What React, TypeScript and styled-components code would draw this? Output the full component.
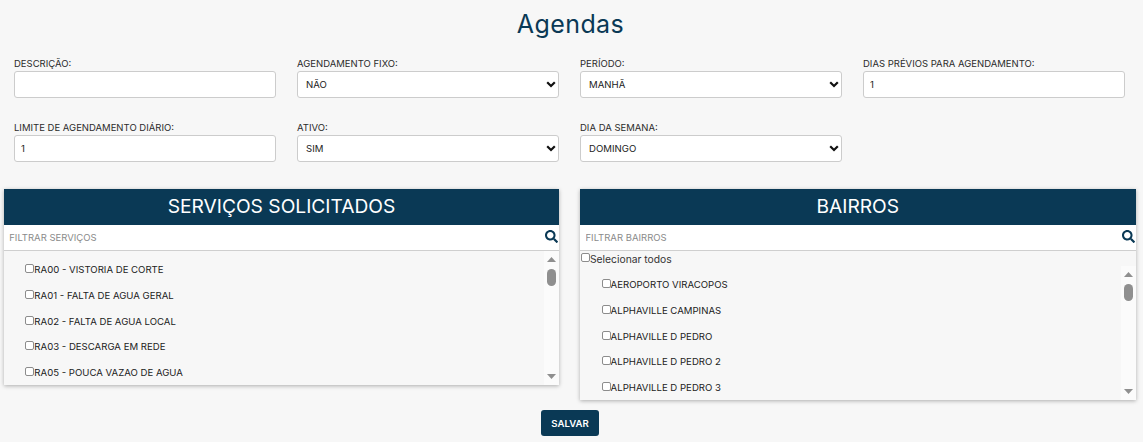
import React from "react";
import styled, { createGlobalStyle } from "styled-components";
import { FaSearch } from "react-icons/fa";

const navy = "#0a3955";
const fontStack = `Inter, "Open Sans", "Liberation Sans", sans-serif`;
const chevron = `url("data:image/svg+xml,%3Csvg xmlns='http://www.w3.org/2000/svg' width='10' height='7' viewBox='0 0 10 7'%3E%3Cpath d='M1.2 1.2 5 5l3.800-3.800' fill='none' stroke='%23111' stroke-width='2.2'/%3E%3C/svg%3E")`;

const GlobalStyle = createGlobalStyle`
  html, body {
    margin: 0;
    background: #f7f7f7;
    font-family: ${fontStack};
  }
  * { box-sizing: border-box; }
`;

const Page = styled.div`
  width: 1143px;
  height: 442px;
  overflow: hidden;
  display: flex;
  flex-direction: column;
`;

const Title = styled.h1`
  margin: 0;
  height: 57px;
  padding: 8px 2px 0 0;
  text-align: center;
  font-size: 25px;
  line-height: 32px;
  font-weight: 400;
  letter-spacing: 0.4px;
  color: ${navy};
`;

const FormGrid = styled.div`
  display: grid;
  grid-template-columns: repeat(4, 262px);
  column-gap: 21px;
  row-gap: 23px;
  padding: 0 14px;
  height: 132px;
  align-content: start;
`;

const Field = styled.div`
  display: flex;
  flex-direction: column;
`;

const Label = styled.label`
  height: 14px;
  font-size: 9.5px;
  line-height: 13px;
  color: #2b2b2b;
`;

const controlStyles = `
  width: 100%;
  height: 27px;
  border: 1px solid #cccccc;
  border-radius: 3px;
  background-color: #ffffff;
  font-family: ${fontStack};
  font-size: 9.6px;
  color: #222222;
  outline: none;
`;

const TextInput = styled.input`
  ${controlStyles}
  padding: 0 6px;
`;

const Select = styled.select`
  ${controlStyles}
  padding: 0 8px;
  appearance: none;
  background-image: ${chevron};
  background-repeat: no-repeat;
  background-position: right 2px center;
`;

const Panels = styled.div`
  display: flex;
  align-items: flex-start;
  gap: 20.75px;
  padding-left: 3.75px;
`;

const Panel = styled.section`
  width: 555.5px;
  display: flex;
  flex-direction: column;
  box-shadow: 0 1px 4px rgba(0, 0, 0, 0.3);
`;

const PanelHeader = styled.h2`
  margin: 0;
  height: 36px;
  background: ${navy};
  color: #ffffff;
  text-align: center;
  font-size: 19.2px;
  line-height: 35px;
  font-weight: 400;
`;

const FilterBar = styled.div`
  height: 26px;
  display: flex;
  align-items: center;
  padding: 0 1px 0 5.5px;
  background: #ffffff;
  border-bottom: 1px solid #cfcfcf;
`;

const FilterInput = styled.input`
  flex: 1;
  padding: 0;
  border: 0;
  outline: none;
  background: transparent;
  font-family: ${fontStack};
  font-size: 9.5px;
  color: #333333;
  &::placeholder {
    color: #8a8a8a;
    opacity: 1;
  }
`;

const SearchIcon = styled(FaSearch)`
  width: 13px;
  height: 13px;
  margin-bottom: 3px;
  color: ${navy};
`;

const SelectAll = styled.label`
  height: 15px;
  display: flex;
  align-items: center;
  padding-left: 1px;
  font-size: 10.3px;
  color: #333333;
`;

const Body = styled.div`
  display: flex;
  height: 134px;
`;

const List = styled.ul`
  flex: 1;
  margin: 0;
  padding: 6px 0 0 21.6px;
  list-style: none;
  overflow: hidden;
`;

const Item = styled.li`
  height: 25.7px;
  display: flex;
  align-items: center;
  font-size: 9.6px;
  color: #222222;
`;

const Check = styled.input.attrs({ type: "checkbox" })`
  appearance: none;
  width: 9px;
  height: 9px;
  margin: 0 0 2px;
  flex: none;
  border: 1px solid #8c8c8c;
  border-radius: 2px;
  background: #ffffff;
`;

const Scrollbar = styled.div`
  width: 15px;
  display: flex;
  flex-direction: column;
  align-items: center;
  background: #fbfbfb;
  padding: 6px 0;
`;

const Thumb = styled.div`
  width: 9px;
  height: 17px;
  margin-top: 7px;
  border-radius: 5px;
  background: #8f8f8f;
`;

const Arrow = styled.svg`
  width: 9px;
  height: 5px;
  fill: #8f8f8f;
  &:last-child {
    margin-top: auto;
  }
`;

const Footer = styled.div`
  display: flex;
  justify-content: center;
  padding: 10px 3px 0 0;
`;

const SaveButton = styled.button`
  width: 58px;
  height: 26px;
  border: 0;
  border-radius: 3px;
  background: ${navy};
  color: #ffffff;
  font-family: ${fontStack};
  font-size: 9.6px;
  font-weight: 600;
`;

const ServiceItems = [
  "RA00 - VISTORIA DE CORTE",
  "RA01 - FALTA DE AGUA GERAL",
  "RA02 - FALTA DE AGUA LOCAL",
  "RA03 - DESCARGA EM REDE",
  "RA05 - POUCA VAZAO DE AGUA",
];

const NeighborhoodItems = [
  "AEROPORTO VIRACOPOS",
  "ALPHAVILLE CAMPINAS",
  "ALPHAVILLE D PEDRO",
  "ALPHAVILLE D PEDRO 2",
  "ALPHAVILLE D PEDRO 3",
];

function CheckList({ items }: { items: string[] }) {
  return (
    <Body>
      <List>
        {items.map((item) => (
          <Item key={item}>
            <Check />
            {item}
          </Item>
        ))}
      </List>
      <Scrollbar>
        <Arrow viewBox="0 0 9 5">
          <path d="M4.5 0 9 5H0z" />
        </Arrow>
        <Thumb />
        <Arrow viewBox="0 0 9 5">
          <path d="M0 0h9L4.500 5z" />
        </Arrow>
      </Scrollbar>
    </Body>
  );
}

function SelectField({ label, value }: { label: string; value: string }) {
  return (
    <Field>
      <Label>{label}</Label>
      <Select defaultValue={value}>
        <option>{value}</option>
      </Select>
    </Field>
  );
}

function InputField({ label, value }: { label: string; value: string }) {
  return (
    <Field>
      <Label>{label}</Label>
      <TextInput defaultValue={value} />
    </Field>
  );
}

export default function App() {
  return (
    <Page>
      <GlobalStyle />
      <Title>Agendas</Title>
      <FormGrid>
        <InputField label="DESCRIÇÃO:" value="" />
        <SelectField label="AGENDAMENTO FIXO:" value="NÃO" />
        <SelectField label="PERÍODO:" value="MANHÃ" />
        <InputField label="DIAS PRÉVIOS PARA AGENDAMENTO:" value="1" />
        <InputField label="LIMITE DE AGENDAMENTO DIÁRIO:" value="1" />
        <SelectField label="ATIVO:" value="SIM" />
        <SelectField label="DIA DA SEMANA:" value="DOMINGO" />
      </FormGrid>
      <Panels>
        <Panel>
          <PanelHeader>SERVIÇOS SOLICITADOS</PanelHeader>
          <FilterBar>
            <FilterInput placeholder="FILTRAR SERVIÇOS" />
            <SearchIcon />
          </FilterBar>
          <CheckList items={ServiceItems} />
        </Panel>
        <Panel>
          <PanelHeader>BAIRROS</PanelHeader>
          <FilterBar>
            <FilterInput placeholder="FILTRAR BAIRROS" />
            <SearchIcon />
          </FilterBar>
          <SelectAll>
            <Check />
            Selecionar todos
          </SelectAll>
          <CheckList items={NeighborhoodItems} />
        </Panel>
      </Panels>
      <Footer>
        <SaveButton>SALVAR</SaveButton>
      </Footer>
    </Page>
  );
}
